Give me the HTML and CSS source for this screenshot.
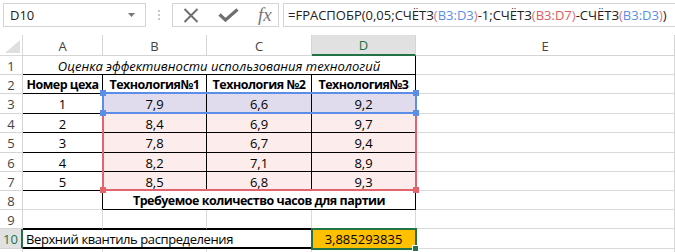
FILE: index.html
```html
<!DOCTYPE html>
<html lang="ru">
<head>
    <meta charset="UTF-8">
    <title>Оценка эффективности</title>
    <link rel="stylesheet" href="styles.css">
</head>
<body>
    <div class="formula-bar">
        <div class="name-box">
            <span>D10</span>
            <svg class="dropdown" width="7" height="4" viewBox="0 0 7 4"><path d="M0 0h7L3.5 4z"/></svg>
        </div>
        <div class="grip"><i></i><i></i><i></i></div>
        <div class="fx-buttons">
            <svg class="icon" width="16" height="15" viewBox="0 0 16 15"><path d="M1.5 1l13 13M14.5 1l-13 13"/></svg>
            <svg class="icon" width="21" height="14" viewBox="0 0 21 14"><path class="thick" d="M1.5 6.5l6 5.5L19.5 1.5"/></svg>
            <span class="fx">fx</span>
        </div>
        <div class="formula-input">=FРАСПОБР(0,05;СЧЁТЗ<span class="paren">(</span><span class="ref-blue">B3:D3</span><span class="paren">)</span>-1;СЧЁТЗ<span class="paren">(</span><span class="ref-red">B3:D7</span><span class="paren">)</span>-СЧЁТЗ<span class="paren">(</span><span class="ref-blue">B3:D3</span><span class="paren">)</span>)</div>
    </div>

    <div class="sheet">
        <div class="cell corner"><svg width="15" height="13" viewBox="0 0 15 13"><path d="M15 0v13H0z"/></svg></div>
        <div class="cell col-head">A</div>
        <div class="cell col-head">B</div>
        <div class="cell col-head">C</div>
        <div class="cell col-head active">D</div>
        <div class="cell col-head">E</div>

        <div class="cell row-head">1</div>
        <div class="cell span-4 italic br bb">Оценка эффективности использования технологий</div>
        <div class="cell"></div>

        <div class="cell row-head">2</div>
        <div class="cell bold br bb">Номер цеха</div>
        <div class="cell bold br bb">Технология№1</div>
        <div class="cell bold br bb">Технология №2</div>
        <div class="cell bold br bb">Технология№3</div>
        <div class="cell"></div>

        <div class="cell row-head">3</div>
        <div class="cell br bb">1</div>
        <div class="cell br bb fill-blue">7,9</div>
        <div class="cell br bb fill-blue">6,6</div>
        <div class="cell br bb fill-blue">9,2</div>
        <div class="cell"></div>

        <div class="cell row-head">4</div>
        <div class="cell br bb">2</div>
        <div class="cell br bb fill-red">8,4</div>
        <div class="cell br bb fill-red">6,9</div>
        <div class="cell br bb fill-red">9,7</div>
        <div class="cell"></div>

        <div class="cell row-head">5</div>
        <div class="cell br bb">3</div>
        <div class="cell br bb fill-red">7,8</div>
        <div class="cell br bb fill-red">6,7</div>
        <div class="cell br bb fill-red">9,4</div>
        <div class="cell"></div>

        <div class="cell row-head">6</div>
        <div class="cell br bb">4</div>
        <div class="cell br bb fill-red">8,2</div>
        <div class="cell br bb fill-red">7,1</div>
        <div class="cell br bb fill-red">8,9</div>
        <div class="cell"></div>

        <div class="cell row-head">7</div>
        <div class="cell br bb">5</div>
        <div class="cell br bb fill-red">8,5</div>
        <div class="cell br bb fill-red">6,8</div>
        <div class="cell br bb fill-red">9,3</div>
        <div class="cell"></div>

        <div class="cell row-head">8</div>
        <div class="cell br"></div>
        <div class="cell span-3 bold br bb">Требуемое количество часов для партии</div>
        <div class="cell"></div>

        <div class="cell row-head">9</div>
        <div class="cell bb"></div>
        <div class="cell bb"></div>
        <div class="cell bb"></div>
        <div class="cell"></div>
        <div class="cell"></div>

        <div class="cell row-head active">10</div>
        <div class="cell span-3 left boxed">Верхний квантиль распределения</div>
        <div class="cell fill-orange">3,885293835</div>
        <div class="cell"></div>

        <div class="cell row-head"></div>
        <div class="cell"></div>
        <div class="cell"></div>
        <div class="cell"></div>
        <div class="cell"></div>
        <div class="cell"></div>

        <!-- reference ranges and active cell -->
        <div class="range range-red"><i class="handle bl"></i><i class="handle br-corner"></i></div>
        <div class="range range-blue"><i class="handle tl"></i><i class="handle tr"></i><i class="handle bl"></i><i class="handle br-corner"></i></div>
        <div class="range range-active"><i class="handle br-corner"></i></div>
    </div>
</body>
</html>
```

FILE: styles.css
```css
body {
    margin: 0;
    font-family: 'Open Sans', 'Noto Sans', sans-serif;
    background: #ffffff;
    color: #000000;
    overflow: hidden;
}

/* formula bar */
.formula-bar {
    display: flex;
    align-items: flex-start;
    height: 35px;
    padding: 3px 0 0 3px;
    box-sizing: border-box;
}

.name-box {
    width: 143px;
    height: 24px;
    border: 1px solid #d4d4d4;
    box-sizing: border-box;
    display: flex;
    align-items: center;
    justify-content: space-between;
    padding: 0 10px 0 6px;
    font-size: 13px;
    color: #222222;
}

.dropdown {
    fill: #777777;
}

.grip {
    width: 26px;
    height: 24px;
    display: flex;
    flex-direction: column;
    align-items: center;
    justify-content: center;
    gap: 2px;
}

.grip i {
    width: 2px;
    height: 2px;
    background: #c8c8c8;
}

.fx-buttons {
    width: 107px;
    height: 24px;
    border: 1px solid #d4d4d4;
    box-sizing: border-box;
    display: flex;
    align-items: center;
    padding-left: 10px;
    gap: 19px;
}

.icon path {
    fill: none;
    stroke: #6f6f6f;
    stroke-width: 2;
}

.icon path.thick {
    stroke-width: 3.2;
}

.fx {
    font-family: 'Liberation Serif', serif;
    font-style: italic;
    font-size: 19px;
    color: #777777;
    line-height: 1;
    margin-top: -2px;
}

.formula-input {
    flex: 1;
    height: 24px;
    margin-left: 4px;
    border: 1px solid #d4d4d4;
    border-right: none;
    box-sizing: border-box;
    display: flex;
    align-items: center;
    padding-left: 4px;
    font-size: 13px;
    color: #222222;
    white-space: nowrap;
    overflow: hidden;
}

.paren {
    color: #e7717a;
}

.ref-blue {
    color: #5b8ee6;
}

.ref-red {
    color: #e05a64;
}

/* sheet grid */
.sheet {
    position: relative;
    display: grid;
    grid-template-columns: 23px 80px 104px 105px 104px 1fr;
    grid-template-rows: 21px 19px 19px 20px 19px 20px 19px 19px 19px 19px 20px 19px;
}

.cell {
    border-right: 1px solid #d9d9d9;
    border-bottom: 1px solid #d9d9d9;
    box-sizing: border-box;
    display: flex;
    align-items: center;
    justify-content: center;
    padding: 1px 3px 0;
    font-size: 13px;
    white-space: nowrap;
    overflow: hidden;
}

.corner {
    align-items: flex-end;
    justify-content: flex-end;
    padding: 0 2px 2px 0;
}

.corner path {
    fill: #dfdfdf;
}

.col-head,
.row-head {
    color: #444444;
    border-color: #d4d4d4;
}

.col-head.active {
    background: #e1e1e1;
    color: #217346;
    border-bottom: 2px solid #217346;
}

.row-head.active {
    background: #e1e1e1;
    color: #217346;
    border-right: 2px solid #217346;
}

.span-4 { grid-column: span 4; }
.span-3 { grid-column: span 3; }

.br { border-right-color: #000000; }
.bb { border-bottom-color: #000000; }

.bold {
    font-weight: 700;
    font-size: 12.5px;
    letter-spacing: -0.5px;
}

.italic { font-style: italic; }

.left {
    justify-content: flex-start;
    letter-spacing: -0.4px;
}

.boxed {
    border-top: 1px solid #000000;
    border-bottom: 2px solid #000000;
    border-right-color: #000000;
}

.fill-blue { background: #e0dcee; }
.fill-red { background: #fdecec; }
.fill-orange { background: #ffc000; }

/* range outlines drawn over the cells */
.range {
    position: absolute;
    border: 2px solid;
    pointer-events: none;
}

.range-red {
    grid-column: 3 / 6;
    grid-row: 4 / 9;
    inset: -2px -1px 0 -1px;
    border-color: #e5636d;
    color: #e5636d;
}

.range-blue {
    grid-column: 3 / 6;
    grid-row: 4 / 5;
    inset: -2px -1px 0 -1px;
    border-color: #5b8ee6;
    color: #5b8ee6;
}

.range-active {
    grid-column: 5 / 6;
    grid-row: 11 / 12;
    inset: -1px -1px -1px -1px;
    border-color: #217346;
    color: #217346;
}

.handle {
    position: absolute;
    width: 6px;
    height: 6px;
    background: currentColor;
}

.range-active .handle {
    border: 1px solid #ffffff;
    box-sizing: border-box;
    width: 7px;
    height: 7px;
}

.handle.tl { left: -4px; top: -4px; }
.handle.tr { right: -4px; top: -4px; }
.handle.bl { left: -4px; bottom: -4px; }
.handle.br-corner { right: -4px; bottom: -4px; }
```
